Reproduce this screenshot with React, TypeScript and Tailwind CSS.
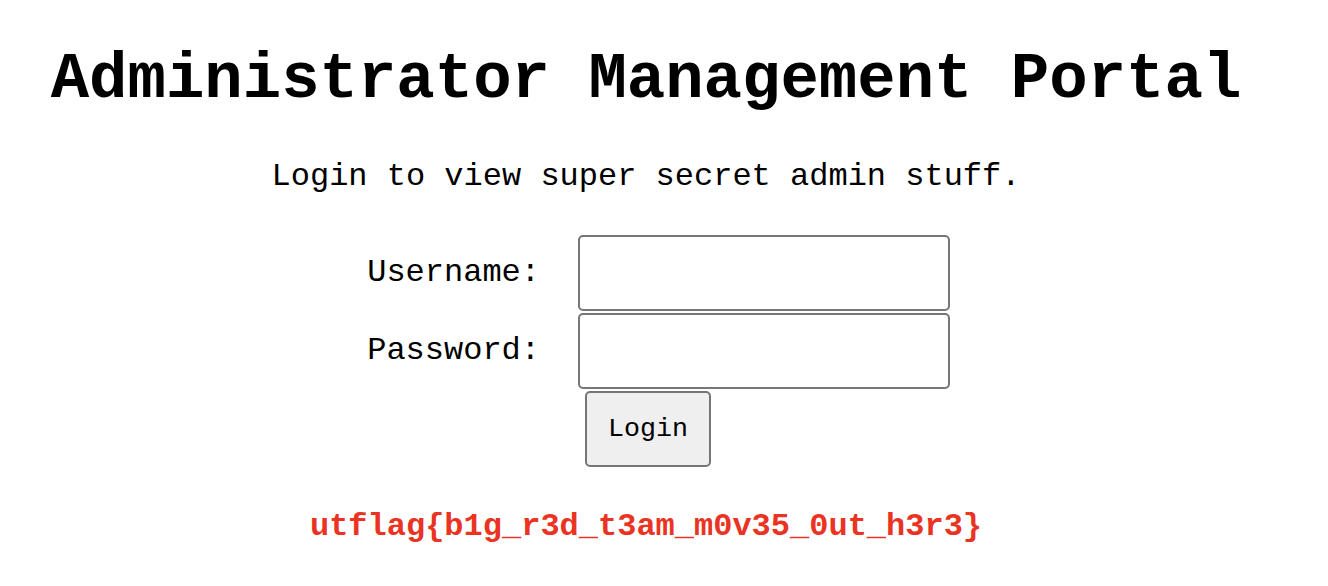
import React from 'react'

export default function App() {
  return (
    <div className="w-[1292px] min-h-[586px] bg-white text-black flex flex-col items-center font-['Liberation_Mono','Courier_New',monospace]">
      <h1 className="mt-[48px] text-[64px] leading-[64px] font-bold">Administrator Management Portal</h1>

      <p className="mt-[49px] text-[32px] leading-[32px]">Login to view super secret admin stuff.</p>

      <form className="self-start ml-[340px] mt-[42px] grid grid-cols-[200px_372px] gap-x-[38px] gap-y-[2px] items-center">
        <label htmlFor="username" className="text-right text-[32px] leading-[32px]">
          Username:
        </label>
        <input
          id="username"
          type="text"
          className="h-[76px] w-[372px] rounded-[5px] border-2 border-[#767676] bg-white px-2 text-[26px] outline-none"
        />

        <label htmlFor="password" className="text-right text-[32px] leading-[32px]">
          Password:
        </label>
        <input
          id="password"
          type="password"
          className="h-[76px] w-[372px] rounded-[5px] border-2 border-[#767676] bg-white px-2 text-[26px] outline-none"
        />

        <div />
        <div>
          <button
            type="button"
            className="ml-[7px] h-[76px] w-[126px] rounded-[5px] border-2 border-[#767676] bg-[#efefef] text-[26.67px] leading-[26px]"
          >
            Login
          </button>
        </div>
      </form>

      <p className="mt-[44px] text-[32px] leading-[32px] font-bold text-[#ea3323]">
        utflag{'{'}b1g_r3d_t3am_m0v35_0ut_h3r3{'}'}
      </p>
    </div>
  )
}
